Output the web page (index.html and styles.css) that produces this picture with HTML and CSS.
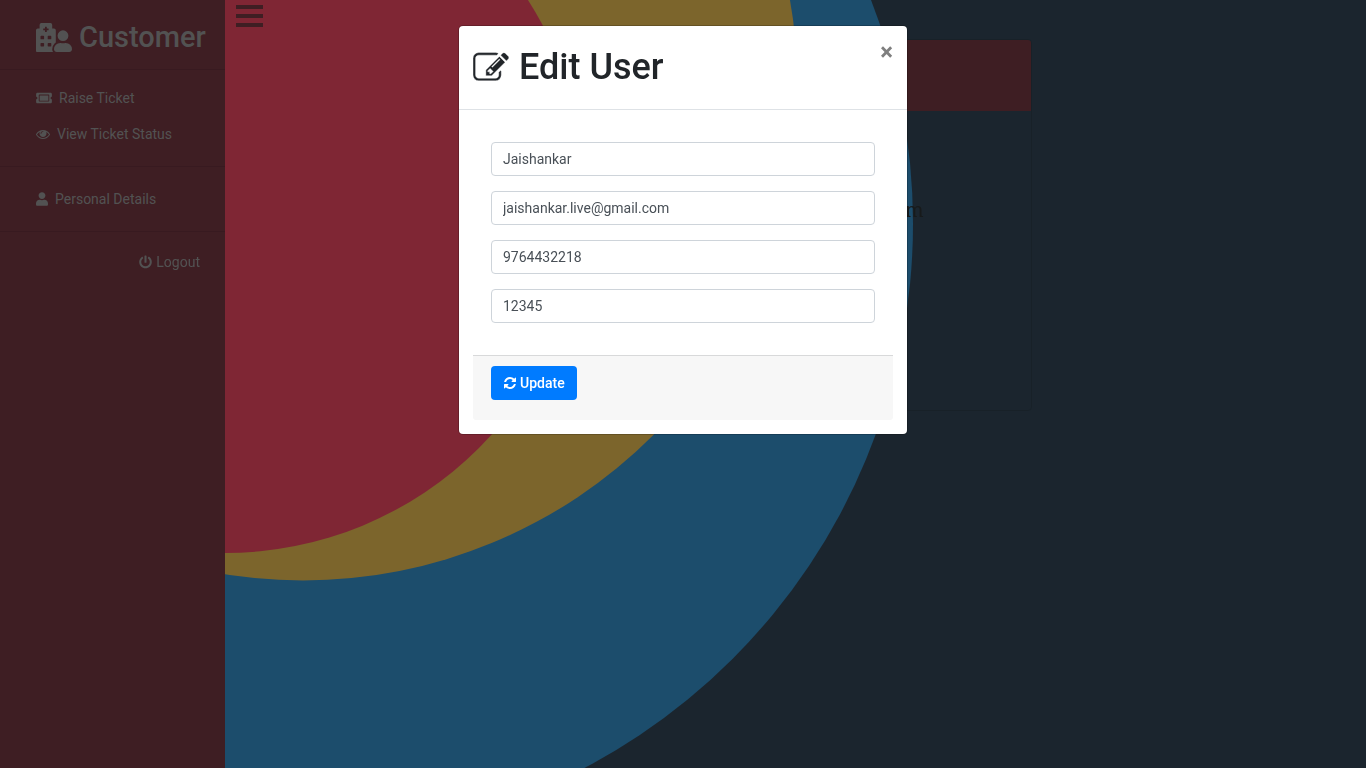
FILE: index.html
```html
<!DOCTYPE html>
<html lang="en">
<head>
<meta charset="utf-8">
<meta name="viewport" content="width=device-width, initial-scale=1">
<title>Edit User</title>
<link rel="stylesheet" href="styles.css">
</head>
<body>
<svg class="backdrop-art" viewBox="0 0 1366 768" preserveAspectRatio="xMinYMin slice" aria-hidden="true">
  <circle cx="297.500" cy="223.500" r="615.500" fill="#389ad9"/>
  <circle cx="303" cy="86" r="494.500" fill="#f9ca58"/>
  <circle cx="225" cy="193.500" r="359.500" fill="#ff4c68"/>
</svg>

<div class="page">
  <aside class="sidebar">
    <h2 class="brand">
      <svg class="brand-icon" viewBox="0 0 640 512" aria-hidden="true"><path d="M480 320a96 96 0 1 0-96-96 96 96 0 0 0 96 96zm48 32a22.880 22.880 0 0 0-7.060 1.090 124.760 124.760 0 0 1-81.890 0A22.820 22.820 0 0 0 432 352a112 112 0 0 0-112 112.620c.14 26.260 21.730 47.380 48 47.380h224c26.280 0 47.860-21.120 48-47.380A112 112 0 0 0 528 352zm-198.080 10.450A145.190 145.190 0 0 1 352 344.620V128a32 32 0 0 0-32-32h-32V32a32 32 0 0 0-32-32H96a32 32 0 0 0-32 32v64H32a32 32 0 0 0-32 32v368a16 16 0 0 0 16 16h288.310A78.620 78.620 0 0 1 288 464.790a143.060 143.060 0 0 1 41.920-102.340zM144 404a12 12 0 0 1-12 12H92a12 12 0 0 1-12-12v-40a12 12 0 0 1 12-12h40a12 12 0 0 1 12 12zm0-128a12 12 0 0 1-12 12H92a12 12 0 0 1-12-12v-40a12 12 0 0 1 12-12h40a12 12 0 0 1 12 12zm48-122a6 6 0 0 1-6 6h-20a6 6 0 0 1-6-6v-26h-26a6 6 0 0 1-6-6v-20a6 6 0 0 1 6-6h26V70a6 6 0 0 1 6-6h20a6 6 0 0 1 6 6v26h26a6 6 0 0 1 6 6v20a6 6 0 0 1-6 6h-26zm80 250a12 12 0 0 1-12 12h-40a12 12 0 0 1-12-12v-40a12 12 0 0 1 12-12h40a12 12 0 0 1 12 12zm0-128a12 12 0 0 1-12 12h-40a12 12 0 0 1-12-12v-40a12 12 0 0 1 12-12h40a12 12 0 0 1 12 12z" fill-rule="evenodd"/></svg>
      Customer
    </h2>
    <nav>
      <div class="nav-group">
        <a class="nav-link" href="#raise"><svg class="icon-wide" viewBox="0 0 576 512" aria-hidden="true"><path d="M128 160h320v192H128V160zm400 96c0 26.510 21.490 48 48 48v96c0 26.510-21.490 48-48 48H48c-26.510 0-48-21.490-48-48v-96c26.510 0 48-21.490 48-48s-21.490-48-48-48v-96c0-26.510 21.490-48 48-48h480c26.510 0 48 21.490 48 48v96c-26.510 0-48 21.490-48 48zm-48-104c0-13.255-10.745-24-24-24H120c-13.255 0-24 10.745-24 24v208c0 13.255 10.745 24 24 24h336c13.255 0 24-10.745 24-24V152z"/></svg>Raise Ticket</a>
        <a class="nav-link" href="#status"><svg class="icon" viewBox="0 0 1792 1792" aria-hidden="true"><path d="M1664 960q-152-236-381-353 61 104 61 225 0 185-131.500 316.500t-316.500 131.500-316.500-131.500-131.500-316.500q0-121 61-225-229 117-381 353 133 205 333.500 326.500t434.500 121.500 434.500-121.500 333.500-326.500zm-720-384q0-20-14-34t-34-14q-125 0-214.500 89.500t-89.500 214.500q0 20 14 34t34 14 34-14 14-34q0-86 61-147t147-61q20 0 34-14t14-34zm848 384q0 34-20 69-140 230-376.500 368.500t-499.500 138.500-499.500-139-376.500-368q-20-35-20-69t20-69q140-229 376.500-368t499.500-139 499.500 139 376.500 368q20 35 20 69z"/></svg>View Ticket Status</a>
      </div>
      <div class="nav-group">
        <a class="nav-link" href="#details"><svg class="icon-slim" viewBox="0 0 448 512" aria-hidden="true"><path d="M224 256c70.700 0 128-57.300 128-128S294.700 0 224 0 96 57.300 96 128s57.300 128 128 128zm89.600 32h-16.700c-22.200 10.200-46.900 16-72.900 16s-50.600-5.800-72.900-16h-16.700C60.200 288 0 348.200 0 422.400V464c0 26.500 21.500 48 48 48h352c26.500 0 48-21.500 48-48v-41.600c0-74.200-60.200-134.400-134.400-134.400z"/></svg>Personal Details</a>
      </div>
      <a class="logout" href="#logout"><svg class="icon-power" viewBox="0 0 512 512" aria-hidden="true"><path d="M400 54.100c63 45 104 118.600 104 201.900 0 136.800-110.800 247.700-247.500 248C120 504.300 8.200 393 8 256.400 7.900 173.100 48.900 99.300 111.800 54.200c11.700-8.300 28-4.800 35 7.700L162.600 90c5.900 10.500 3.100 23.800-6.600 31-41.500 30.800-68 79.600-68 134.900-.1 92.300 74.500 168.100 168 168.100 91.600 0 168.600-74.200 168-169.100-.3-51.800-24.700-101.800-68.100-134-9.700-7.200-12.400-20.500-6.500-30.900l15.800-28.100c7-12.400 23.200-16.100 34.800-7.800zM296 264V24c0-13.300-10.700-24-24-24h-32c-13.300 0-24 10.700-24 24v240c0 13.300 10.700 24 24 24h32c13.300 0 24-10.700 24-24z"/></svg>Logout</a>
    </nav>
  </aside>
  <main class="content">
    <button class="menu-toggle" type="button" aria-label="Toggle menu"><span></span><span></span><span></span></button>
    <section class="card">
      <div class="card-header"></div>
      <div class="card-body">jaishankar.live@gmail.com</div>
    </section>
  </main>
</div>

<div class="overlay">
  <div class="modal" role="dialog" aria-modal="true" aria-labelledby="modal-title">
    <header class="modal-header">
      <h1 class="modal-title" id="modal-title"><svg class="title-icon" viewBox="0 0 1792 1792" aria-hidden="true"><path d="M888 1184l116-116-152-152-116 116v56h96v96h56zm440-720q-16-16-33 1l-350 350q-17 17-1 33t33-1l350-350q17-17 1-33zm80 594v190q0 119-84.500 203.500t-203.500 84.500h-832q-119 0-203.500-84.500t-84.500-203.500v-832q0-119 84.500-203.500t203.500-84.500h832q63 0 117 25 15 7 18 23 3 17-9 29l-49 49q-14 14-32 8-23-6-45-6h-832q-66 0-113 47t-47 113v832q0 66 47 113t113 47h832q66 0 113-47t47-113v-126q0-13 9-22l64-64q15-15 35-7t20 29zm-96-738l288 288-672 672h-288v-288zm444 132l-92 92-288-288 92-92q28-28 68-28t68 28l152 152q28 28 28 68t-28 68z"/></svg>Edit User</h1>
      <button class="close" type="button" aria-label="Close">×</button>
    </header>
    <form class="modal-body">
      <div class="fields">
        <input class="field" type="text" aria-label="Name" value="Jaishankar">
        <input class="field" type="email" aria-label="Email" value="jaishankar.live@gmail.com">
        <input class="field" type="tel" aria-label="Phone" value="9764432218">
        <input class="field" type="text" aria-label="Password" value="12345">
      </div>
      <div class="form-footer">
        <button class="update" type="button"><svg class="icon" viewBox="0 0 1792 1792" aria-hidden="true"><path d="M1639 1056q0 5-1 7-64 268-268 434.500t-478 166.500q-146 0-282.500-55t-243.500-157l-129 129q-19 19-45 19t-45-19-19-45v-448q0-26 19-45t45-19h448q26 0 45 19t19 45-19 45l-137 137q71 66 161 102t187 36q134 0 250-65t186-179q11-17 53-117 8-23 30-23h192q13 0 22.500 9.500t9.500 22.500zm25-800v448q0 26-19 45t-45 19h-448q-26 0-45-19t-19-45 19-45l138-138q-148-137-349-137-134 0-250 65t-186 179q-11 17-53 117-8 23-30 23h-199q-13 0-22.500-9.500t-9.500-22.500v-7q65-268 270-434.500t480-166.500q146 0 284 55.500t245 156.500l130-129q19-19 45-19t45 19 19 45z"/></svg>Update</button>
      </div>
    </form>
  </div>
</div>
</body>
</html>
```
FILE: styles.css
```css
* { box-sizing: border-box; }

body {
  margin: 0;
  background: #374b5c;
  color: #212529;
  font-family: Roboto, "Liberation Sans", sans-serif;
  font-size: 14px;
  line-height: 20px;
}

svg { display: block; flex: none; fill: currentColor; }

.backdrop-art {
  position: fixed;
  inset: 0;
  width: 100%;
  height: 100%;
}

.page {
  position: relative;
  display: flex;
  min-height: 100vh;
}

.sidebar {
  flex: none;
  width: 225px;
  background: #7c3c46;
  color: #a4a4a4;
}

.brand {
  display: flex;
  align-items: center;
  gap: 7px;
  margin: 0;
  padding: 20px 0 15px 36px;
  border-bottom: 1px solid #703540;
  font-size: 29px;
  font-weight: 500;
  line-height: 34px;
}

.brand-icon { width: 36px; height: 29px; }
.icon { width: 14px; height: 14px; }
.icon-wide { width: 16px; height: 14px; }
.icon-slim { width: 12px; height: 14px; }
.icon-power { width: 13px; height: 14px; }

.nav-group {
  padding: 14px 0;
  border-bottom: 1px solid #703540;
}

.nav-group:first-child { padding-top: 10px; }

.nav-link {
  display: flex;
  align-items: center;
  gap: 7px;
  padding: 8px 0 8px 36px;
}

.nav-link,
.logout { color: inherit; text-decoration: none; }

.logout {
  display: flex;
  align-items: center;
  justify-content: flex-end;
  gap: 4px;
  padding: 20px 25px;
}

.content { flex: 1; padding: 0 11px; }

.menu-toggle {
  display: flex;
  flex-direction: column;
  gap: 5px;
  width: 27px;
  padding: 5px 0 0;
  border: 0;
  background: none;
}

.menu-toggle span { width: 27px; height: 4px; background: #7c3c46; }

.card {
  width: 472px;
  max-width: 100%;
  margin: 12px auto 0;
  border: 1px solid #314351;
  border-radius: 4px;
}

.card-header { height: 71px; border-radius: 3px 3px 0 0; background: #7c3c46; }

.card-body {
  min-height: 299px;
  padding: 84px 14px 0;
  color: #2f3436;
  font-family: "Noto Serif", "DejaVu Serif", serif;
  font-size: 20px;
  line-height: 30px;
  text-align: center;
}

.overlay {
  position: fixed;
  inset: 0;
  overflow: auto;
  padding: 26px 8px;
  background: rgba(0, 0, 0, 0.5);
}

.modal {
  max-width: 448px;
  margin: 0 auto;
  border-radius: 4px;
  background: #fff;
  box-shadow: 0 0 0 1px rgba(0, 0, 0, 0.2);
}

.modal-header {
  display: flex;
  align-items: flex-start;
  justify-content: space-between;
  padding: 14px;
  border-bottom: 1px solid #dee2e6;
}

.modal-title {
  display: flex;
  align-items: center;
  gap: 10px;
  margin: 0;
  padding: 6px 0;
  font-size: 36px;
  font-weight: 500;
  line-height: 43px;
}

.title-icon { width: 36px; height: 36px; stroke: #fff; stroke-width: 20; }

.close {
  padding: 0;
  border: 0;
  background: none;
  color: #7f7f7f;
  font-family: inherit;
  font-size: 24px;
  font-weight: 700;
  line-height: 24px;
}

.modal-body { padding: 14px; }

.fields {
  display: grid;
  gap: 15px;
  padding: 18px 18px 32px;
}

.field {
  width: 100%;
  height: 34px;
  padding: 0 11px;
  border: 1px solid #ced4da;
  border-radius: 4px;
  background: #fff;
  color: #495057;
  font: inherit;
}

.form-footer {
  padding: 10px 18px 20px;
  border-top: 1px solid #d8d9da;
  border-radius: 0 0 3px 3px;
  background: #f7f7f7;
}

.update {
  display: flex;
  align-items: center;
  gap: 3px;
  height: 34px;
  padding: 0 12px;
  border: 0;
  border-radius: 4px;
  background: #007bff;
  color: #fff;
  font: inherit;
  font-weight: 500;
}
```
